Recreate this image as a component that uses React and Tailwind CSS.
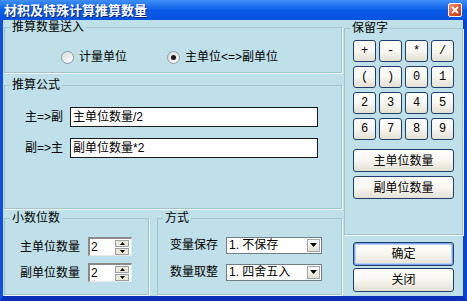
import React from "react";

const Group = ({ title, className = "", children }) => (
  <fieldset className={`border border-[#a6c3cc] shadow-[1px_1px_0_#eef8fb] ${className}`}>
    <legend className="ml-[5px] px-[2px] leading-[14px]">{title}</legend>
    {children}
  </fieldset>
);

const Btn = ({ children, className = "" }) => (
  <button className={`flex items-center justify-center rounded-[3px] border border-[#1f3e6e] bg-gradient-to-b from-[#ffffff] via-[#f7f6f0] to-[#e4e1d4] text-black leading-none ${className}`}>
    {children}
  </button>
);

const Radio = ({ checked, label }) => (
  <div className="flex items-center gap-[5px]">
    <span className="flex h-[13px] w-[13px] items-center justify-center rounded-full border border-[#8d9ca3] bg-gradient-to-br from-[#d8dcd8] to-[#ffffff]">
      {checked && <span className="h-[5px] w-[5px] rounded-full bg-[#1a1a1a]" />}
    </span>
    <span className="leading-[14px]">{label}</span>
  </div>
);

const Spin = ({ value }) => (
  <div className="flex h-[19px] w-[44px] items-center border-l-2 border-t-2 border-r border-b border-l-[#8a8a8a] border-t-[#8a8a8a] border-r-[#e8e8e8] border-b-[#e8e8e8] bg-white pl-[1px] pr-[2px]">
    <span className="flex-1 leading-none">{value}</span>
    <div className="flex flex-col gap-px">
      <span className="flex h-[7px] w-[14px] items-center justify-center border border-[#9aa0a4] bg-[#ece9d8]">
        <svg width="5" height="3" viewBox="0 0 5 3"><path d="M2.5 0L5 3H0z" fill="#000" /></svg>
      </span>
      <span className="flex h-[7px] w-[14px] items-center justify-center border border-[#9aa0a4] bg-[#ece9d8]">
        <svg width="5" height="3" viewBox="0 0 5 3"><path d="M0 0h5L2.5 3z" fill="#000" /></svg>
      </span>
    </div>
  </div>
);

const Select = ({ value }) => (
  <div className="flex h-[17px] w-[96px] items-center border border-[#6f7f88] bg-white pl-[2px] pr-px">
    <span className="flex-1 leading-none">{value}</span>
    <span className="flex h-[13px] w-[13px] items-center justify-center border border-[#a0a6aa] bg-gradient-to-b from-[#ffffff] to-[#e2dfd3]">
      <svg width="7" height="4" viewBox="0 0 7 4"><path d="M0 0h7L3.5 4z" fill="#000" /></svg>
    </span>
  </div>
);

export default function App() {
  return (
    <div className="flex h-[301px] w-[467px] flex-col overflow-hidden bg-[#bfe0e8] font-['Liberation_Sans','Noto_Sans_CJK_SC',sans-serif] text-[12px] text-black">
      {/* title bar */}
      <div className="flex h-[20px] shrink-0 items-center justify-between bg-gradient-to-b from-[#3f8ff7] via-[#0a5de8] to-[#0652dd] pl-[4px] pr-[5px]">
        <span className="text-[13px] font-bold leading-none text-white [text-shadow:1px_1px_0_#0a2a80]">材积及特殊计算推算数量</span>
        <span className="flex h-[14px] w-[14px] items-center justify-center rounded-[2px] border border-white bg-gradient-to-br from-[#f09a7a] via-[#e2552c] to-[#c43a14]">
          <svg width="8" height="8" viewBox="0 0 8 8"><path d="M1 1l6 6M7 1L1 7" stroke="#fff" strokeWidth="1.8" /></svg>
        </span>
      </div>

      {/* body */}
      <div className="flex flex-1 border-b-[5px] border-l-[3px] border-r-[4px] border-b-[#0a2fb8] border-l-[#1050e0] border-r-[#0a44d0]">
        {/* left column */}
        <div className="ml-px flex w-[338px] flex-col">
          <Group title="推算数量送入" className="h-[53px]">
            <div className="mt-[16px] flex items-center gap-[40px] pl-[56px]">
              <Radio label="计量单位" />
              <Radio checked label="主单位<=>副单位" />
            </div>
          </Group>

          <Group title="推算公式" className="mt-[5px] h-[131px]">
            <div className="mt-[15px] flex flex-col gap-[11px] pl-[20px]">
              <div className="flex items-center">
                <span className="w-[45px] whitespace-nowrap leading-none">主=&gt;副</span>
                <div className="flex h-[20px] w-[248px] items-center border border-[#1a1a1a] bg-white pl-[2px]">主单位数量/2</div>
              </div>
              <div className="flex items-center">
                <span className="w-[45px] whitespace-nowrap leading-none">副=&gt;主</span>
                <div className="flex h-[20px] w-[248px] items-center border border-[#1a1a1a] bg-white pl-[2px]">副单位数量*2</div>
              </div>
            </div>
          </Group>

          <div className="mt-[2px] flex gap-[8px]">
            <Group title="小数位数" className="h-[84px] w-[145px]">
              <div className="mt-[12px] flex flex-col gap-[7px] pl-[15px]">
                <div className="flex items-center gap-[8px]">
                  <span className="w-[60px] whitespace-nowrap">主单位数量</span>
                  <Spin value="2" />
                </div>
                <div className="flex items-center gap-[8px]">
                  <span className="w-[60px] whitespace-nowrap">副单位数量</span>
                  <Spin value="2" />
                </div>
              </div>
            </Group>
            <Group title="方式" className="h-[84px] flex-1">
              <div className="mt-[11px] flex flex-col gap-[9px] pl-[12px]">
                <div className="flex items-center gap-[8px]">
                  <span className="w-[48px] whitespace-nowrap">变量保存</span>
                  <Select value="1. 不保存" />
                </div>
                <div className="flex items-center gap-[8px]">
                  <span className="w-[48px] whitespace-nowrap">数量取整</span>
                  <Select value="1. 四舍五入" />
                </div>
              </div>
            </Group>
          </div>
        </div>

        {/* right column */}
        <div className="ml-[2px] flex w-[119px] flex-col">
          <Group title="保留字" className="mt-px h-[214px]">
            <div className="mt-[5px] flex flex-col pl-[8px]">
              <div className="grid grid-cols-[repeat(4,23px)] gap-x-[3px] gap-y-[4px]">
                {["+", "-", "*", "/", "(", ")", "0", "1", "2", "3", "4", "5", "6", "7", "8", "9"].map((k) => (
                  <Btn key={k} className="h-[22px] font-['Liberation_Mono',monospace]">{k}</Btn>
                ))}
              </div>
              <Btn className="mt-[9px] h-[23px] w-[101px]">主单位数量</Btn>
              <Btn className="mt-[4px] h-[23px] w-[101px]">副单位数量</Btn>
            </div>
          </Group>
          <div className="mt-[7px] flex flex-col gap-[2px] pl-[9px]">
            <Btn className="h-[24px] w-[101px] shadow-[inset_0_0_0_1px_#7ba2e7,inset_0_0_0_2px_#b9d1f7]">确定</Btn>
            <Btn className="h-[24px] w-[101px]">关闭</Btn>
          </div>
        </div>
      </div>
    </div>
  );
}
